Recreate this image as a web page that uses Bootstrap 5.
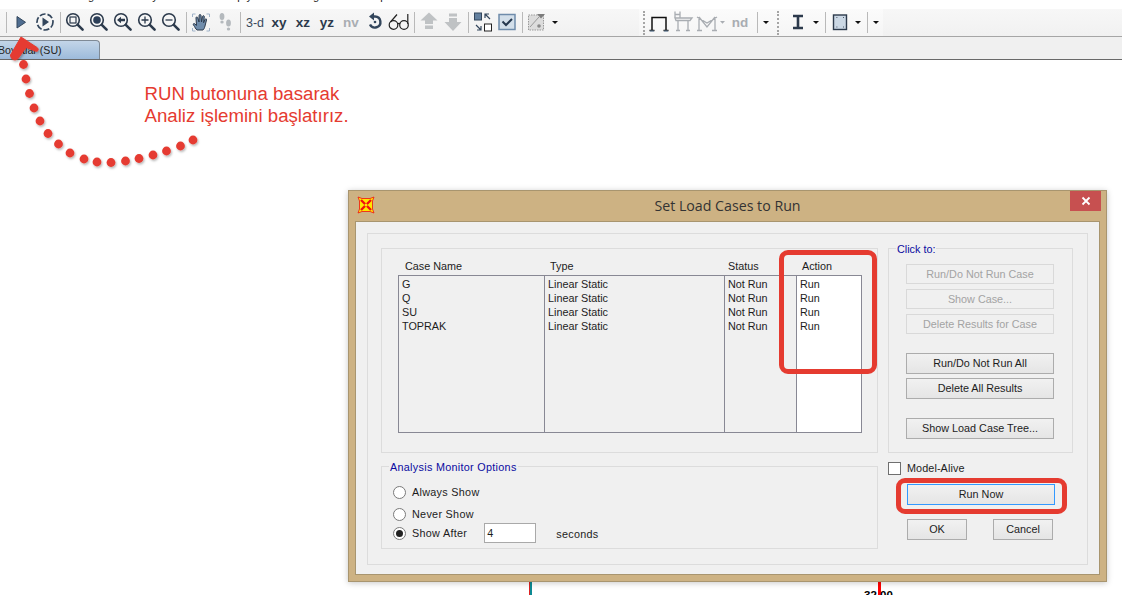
<!DOCTYPE html>
<html lang="tr">
<head>
<meta charset="utf-8">
<title>Set Load Cases to Run</title>
<link href="https://cdn.jsdelivr.net/npm/bootstrap@5.3.0/dist/css/bootstrap.min.css" rel="stylesheet">
<style>
html,body{height:595px;overflow:hidden;background:#fff;}
body{font-family:"Liberation Sans",Arial,sans-serif;font-size:10.8px;color:#1c1c1c;line-height:14px;}
.app{width:1122px;height:595px;overflow:hidden;position:relative;}
.menu-strip{height:9px;overflow:hidden;background:#fff;}
.menu-line{margin-top:-10px;line-height:13px;font-size:11px;padding-left:82px;color:#222;white-space:pre;}
.tool-row{height:28px;background:linear-gradient(#f7f7f7,#f1f1f1);border-bottom:1px solid #a6a6a6;}
.tool-left{flex:0 0 639px;padding-left:6px;}
.tool-right{width:244px;background:linear-gradient(#fbfbfb,#f5f5f5);}
.tslot{width:24px;height:27px;flex:none;display:flex;align-items:center;justify-content:center;}
.tslot svg{display:block;}
.tsep{width:1px;height:21px;background:#b9b9b9;flex:none;margin:0 2px 0 3px;}
.tcaret{width:12px;height:27px;flex:none;display:flex;align-items:center;justify-content:center;}
.tcaret::after{content:"";border-left:3px solid transparent;border-right:3px solid transparent;border-top:3px solid #111;}
.tgrip{width:3px;height:24px;flex:none;border-left:2px dotted #a5a5a5;}
.ttxt{font-size:13.5px;font-weight:700;color:#2c3a4c;}
.ttxt-off{color:#a9adb2;}
.ttxt-thin{font-size:12.5px;font-weight:400;color:#3a4a5c;}
.gap-left-b{margin-left:9px;margin-right:2px;}
.gap-left-c{margin-left:5px;}
.gap-left-e{margin-left:6px;}
.gap-left-d{margin-left:1px;}
.tab-row{height:23px;background:#f0f0f0;border-bottom:1px solid #696969;padding-top:3px;}
.doc-tab{width:103px;height:19px;margin-left:-3px;background:linear-gradient(#c3d5e8,#9dbbdb);border:1px solid #7f8a96;border-bottom:0;border-top-right-radius:4px;padding-left:0;font-size:10.6px;line-height:18px;color:#222;white-space:nowrap;overflow:hidden;}
.note-text{position:absolute;left:144.500px;top:83px;font-size:18.65px;line-height:22px;color:#e53b30;white-space:nowrap;}
.arrow-art{position:absolute;left:0;top:0;}
.win{position:absolute;left:348px;top:190px;width:759px;height:392px;background:#cdb283;border:1px solid #a8956f;box-shadow:0 1px 6px rgba(0,0,0,.22);padding:0 6px 6px;}
.win-title{height:30px;position:relative;font-family:"Open Sans","Noto Sans",sans-serif;font-size:14.2px;color:#333;}
.win-icon{position:absolute;left:2px;top:5px;}
.win-close{position:absolute;right:-1px;top:0;width:31px;height:20px;background:#c75050;display:flex;align-items:center;justify-content:center;}
.win-client{height:354px;background:#f0f0f0;border:1px solid #a8956f;padding:11px;}
.frame-box{height:332px;border:1px solid #dcdcdc;padding:14px 14px 14px 13px;display:grid;grid-template-columns:497px 185px;grid-template-rows:205px 83px;column-gap:10px;row-gap:13px;}
.grp{border:1px solid #dcdcdc;position:relative;}
.grp-legend{position:absolute;left:7px;top:-6px;background:#f0f0f0;padding:0 1px;line-height:13px;color:#0a0aa0;white-space:nowrap;}
.grp-cases{padding:10px 15px 0 16px;}
.cols-head,.cols-body{display:grid;grid-template-columns:146px 180px 72px 66px;}
.cols-head{height:16px;line-height:15px;}
.cols-head>div:nth-child(1){padding-left:7px;}
.cols-head>div:nth-child(2){padding-left:6px;}
.cols-head>div:nth-child(3){padding-left:4px;}
.cols-head>div:nth-child(4){padding-left:6px;}
.cols-body{height:158px;border:1px solid #888894;grid-template-columns:146px 180px 72px 64px;}
.cols-body>div{padding-top:1px;padding-left:3px;border-right:1px solid #888894;}
.cols-body>div:last-child{background:#fff;border-right:0;}
.grp-click{padding:15px 0 0 17px;}
.wbtn{display:block;width:148px;height:21px;padding:0 0 2px;border:1px solid #acacac;border-radius:0;background:linear-gradient(#f1f1f1,#e5e5e5);font:inherit;line-height:16px;color:#1c1c1c;text-align:center;}
.wbtn[disabled]{height:20px;padding:0;background:#f0f0f0;border-color:#d9d9d9;color:#a3a3a3;}
.step-a{margin-top:5px;}
.step-b{margin-top:19px;}
.step-c{margin-top:4px;}
.grp-mon{padding:18px 0 0 11px;letter-spacing:.3px;}
.radio-line{display:flex;align-items:center;height:14px;}
.radio-dot{width:13px;height:13px;border:1px solid #7a7a7a;border-radius:50%;background:#fff;flex:none;margin-right:6px;display:flex;align-items:center;justify-content:center;}
.radio-dot.on::after{content:"";width:7px;height:7px;border-radius:50%;background:#222;}
.line-2{margin-top:8px;}
.line-3{margin-top:5px;}
.num-box{width:52px;height:20px;border:1px solid #a9a9a9;background:#fff;margin-left:17px;padding-left:2px;line-height:19px;flex:none;}
.unit-txt{margin-left:20px;margin-top:2px;}
.alive{display:flex;align-items:center;height:13px;margin-top:-4px;letter-spacing:.1px;}
.alive-box{width:13px;height:13px;border:1px solid #6f6f6f;background:#fff;margin-right:6px;flex:none;}
.alive-name{margin-top:-2px;}
.run-btn{width:148px;margin:9px 0 0 19px;border-color:#3399ff;}
.pair{width:146px;margin:14px 0 0 19px;}
.pair .wbtn{width:60px;}
.red-ring{position:absolute;border:5px solid #e53b30;border-radius:9px;}
.ring-action{left:430px;top:59px;width:98px;height:124px;}
.ring-run{left:547px;top:287px;width:171px;height:36px;}
.hline{position:absolute;top:582px;height:13px;}
.hline-a{left:529px;width:3px;background:linear-gradient(90deg,#d22 0 1px,#0d8a93 1px);}
.hline-b{left:878px;width:3px;background:#f00;}
.dim-text{position:absolute;left:864px;top:589px;font-weight:700;font-size:11.5px;line-height:13px;color:#000;}
</style>
</head>
<body>
<div class="app">
  <svg width="0" height="0" class="position-absolute">
    <symbol id="mag" viewBox="0 0 24 27">
      <circle cx="10" cy="11" r="6.3" fill="#f6f6f6" stroke="#2c3a4c" stroke-width="1.6"/>
      <line x1="14.8" y1="15.8" x2="19.6" y2="20.6" stroke="#2c3a4c" stroke-width="2.6" stroke-linecap="round"/>
    </symbol>
  </svg>

  <div class="menu-strip"><div class="menu-line">ag                   y                          p y                    g                    p</div></div>

  <div class="tool-row d-flex">
    <div class="tool-left d-flex align-items-center">
      <span class="tsep ms-0"></span>
      <span class="tslot"><svg width="24" height="27" viewBox="0 0 24 27"><path d="M8 7.500V19l8.500-5.700z" fill="#4f6d90" stroke="#33465c"/></svg></span>
      <span class="tslot"><svg width="24" height="27" viewBox="0 0 24 27"><circle cx="12" cy="13" r="8" fill="none" stroke="#33465c" stroke-width="1.700" stroke-dasharray="6 2"/><path d="M9.500 8.500v9l6.500-4.500z" fill="#33465c"/></svg></span>
      <span class="tsep"></span>
      <span class="tslot"><svg width="24" height="27" viewBox="0 0 24 27"><use href="#mag"/><rect x="7" y="8" width="6" height="6" fill="none" stroke="#2c3a4c" stroke-width="1.200"/></svg></span>
      <span class="tslot"><svg width="24" height="27" viewBox="0 0 24 27"><use href="#mag"/><circle cx="10" cy="11" r="3.800" fill="#2c3f58"/></svg></span>
      <span class="tslot"><svg width="24" height="27" viewBox="0 0 24 27"><use href="#mag"/><path d="M6 11l4-3.200v2h4v2.400h-4v2z" fill="#2c3a4c"/></svg></span>
      <span class="tslot"><svg width="24" height="27" viewBox="0 0 24 27"><use href="#mag"/><path d="M10 7.500v7M6.500 11h7" stroke="#2c3a4c" stroke-width="1.300"/></svg></span>
      <span class="tslot"><svg width="24" height="27" viewBox="0 0 24 27"><use href="#mag"/><path d="M6.500 11h7" stroke="#2c3a4c" stroke-width="1.300"/></svg></span>
      <span class="tsep"></span>
      <span class="tslot"><svg width="24" height="27" viewBox="0 0 24 27"><path d="M3.500 8V5h3M17.500 5h3v3M20.500 19v3h-3M6.500 22h-3v-3" fill="none" stroke="#9fb2c8"/><path d="M8 21c-1.500-1-2-3-3.500-5-.8-1.200.5-2 1.500-1l1.500 1.500L7 9c-.2-1.200 1.500-1.400 1.800-.2L10 13l.1-6.500c0-1.300 1.800-1.300 1.900 0l.5 6.500 1-5.500c.3-1.200 1.900-1 1.800.2l-.7 6 1.400-3.300c.5-1 1.900-.6 1.500.6L16 17c-.5 2-1 3-2 4z" fill="#6f8cab" stroke="#2c3a4c"/></svg></span>
      <span class="tslot"><svg width="24" height="27" viewBox="0 0 24 27" fill="#b4b9bd"><ellipse cx="9" cy="7.500" rx="2.400" ry="3.500"/><ellipse cx="9" cy="13" rx="1.700" ry="1.500"/><ellipse cx="15.500" cy="14" rx="2.400" ry="3.500"/><ellipse cx="15.500" cy="20" rx="1.700" ry="1.500"/></svg></span>
      <span class="tsep"></span>
      <span class="tslot ttxt ttxt-thin">3-d</span>
      <span class="tslot ttxt">xy</span>
      <span class="tslot ttxt">xz</span>
      <span class="tslot ttxt">yz</span>
      <span class="tslot ttxt ttxt-off">nv</span>
      <span class="tslot"><svg width="24" height="27" viewBox="0 0 24 27"><path d="M8 7.500h4a5.500 5.500 0 1 1-5 8" fill="none" stroke="#33465c" stroke-width="2.400"/><path d="M11 3.500v8L6 7.500z" fill="#33465c"/><circle cx="12" cy="13" r="1.300" fill="#33465c"/></svg></span>
      <span class="tslot"><svg width="24" height="27" viewBox="0 0 24 27" fill="none" stroke="#222" stroke-width="1.200"><circle cx="6.500" cy="16" r="4.300"/><circle cx="17" cy="16" r="4.300"/><path d="M10.500 15c1-.8 2-.8 2.700 0M3.500 13L10 5.500M20.800 15V5"/></svg></span>
      <span class="tsep"></span>
      <span class="tslot"><svg width="24" height="27" viewBox="0 0 24 27" fill="#bfc2c4"><path d="M12 3.500l8.500 8h-4.500v3.500H8v-3.500H3.500z"/><rect x="8" y="16.500" width="8" height="3.500"/></svg></span>
      <span class="tslot"><svg width="24" height="27" viewBox="0 0 24 27" fill="#bfc2c4"><rect x="8" y="4.500" width="8" height="3"/><path d="M8 9h8v4h4.500L12 22 3.500 13H8z"/></svg></span>
      <span class="tsep"></span>
      <span class="tslot"><svg width="24" height="27" viewBox="0 0 24 27"><rect x="3.500" y="4" width="7" height="7" fill="#63809f" stroke="#33465c"/><rect x="13.500" y="15" width="7" height="7" fill="#fff" stroke="#222"/><path d="M19 10l-4.500-4.500M14 9V5h4M5 16l4.500 4.500M10 17v4H6" fill="none" stroke="#33465c" stroke-width="1.200"/></svg></span>
      <span class="tslot"><svg width="24" height="27" viewBox="0 0 24 27"><rect x="4" y="5.500" width="16" height="15" fill="#d3dfea" stroke="#6f8cab" stroke-width="1.500"/><path d="M7.500 12.500l3.500 3.500 6-6" fill="none" stroke="#26384e" stroke-width="2"/></svg></span>
      <span class="tsep"></span>
      <span class="tslot"><svg width="24" height="27" viewBox="0 0 24 27"><rect x="3.500" y="6" width="15" height="15" fill="#dcdcdc" stroke="#999" stroke-dasharray="1.500 1"/><path d="M5 18l9-10" stroke="#999"/><circle cx="14" cy="17" r="1.800" fill="#888"/><path d="M12 5h8l-4 4.500z" fill="#7c7c7c"/></svg></span>
      <span class="tcaret"></span>
    </div>
    <div class="tool-right d-flex align-items-center">
      <span class="tgrip ms-1"></span>
      <span class="tslot gap-left-d"><svg width="24" height="27" viewBox="0 0 24 27"><path d="M5 21V8.500h14V21M2.500 21.500h5M16.500 21.500h5" fill="none" stroke="#111" stroke-width="1.500"/><path d="M3 22h4M17 22h4" stroke="#6f8cab"/></svg></span>
      <span class="tslot"><svg width="24" height="27" viewBox="0 0 24 27" fill="none" stroke="#a9adb2" stroke-width="1.300"><path d="M4 9h17l-2 2.500h-14zM7 11.500V21M17 11.500V21M5 21.500h4M15 21.500h4M4 2.500v6M9 2.500v6M4 5.500h5"/></svg></span>
      <span class="tslot"><svg width="24" height="27" viewBox="0 0 24 27" overflow="visible" fill="none" stroke="#a9adb2" stroke-width="1.300"><path d="M2 8l10 6 10-6M4 8v13M20 8v13M2 21.500h5M17 21.500h5M4 8l8 10 8-10"/><path d="M25 12h5l-2.500 2.800z" fill="#a9adb2" stroke="none"/></svg></span>
      <span class="tslot ttxt ttxt-off gap-left-b">nd</span>
      <span class="tsep"></span>
      <span class="tcaret"></span>
      <span class="tgrip gap-left-c"></span>
      <span class="tslot gap-left-e"><svg width="24" height="27" viewBox="0 0 24 27"><path d="M7 7h10M7 19h10M12 7v12" stroke="#2c3a4c" stroke-width="2.600" fill="none"/></svg></span>
      <span class="tcaret"></span>
      <span class="tsep"></span>
      <span class="tslot"><svg width="24" height="27" viewBox="0 0 24 27"><rect x="5.500" y="6" width="13" height="14.500" fill="#cbd8e5" stroke="#2c3a4c" stroke-width="1.400"/><path d="M8.500 8.500h.8M15 8.500h.8M8.500 18h.8M15 18h.8" stroke="#2c3a4c"/></svg></span>
      <span class="tcaret"></span>
      <span class="tsep"></span>
      <span class="tcaret"></span>
    </div>
  </div>

  <div class="tab-row"><div class="doc-tab">Boyutlar (SU)</div></div>

  <svg class="arrow-art" width="230" height="180" viewBox="0 0 230 180">
    <defs><filter id="soft" x="-20%" y="-20%" width="140%" height="140%"><feDropShadow dx="1" dy="1.500" stdDeviation="1" flood-color="#000" flood-opacity=".3"/></filter></defs>
    <g fill="#e53b30" filter="url(#soft)">
      <path d="M21 37l16 10.500c2 1.500 1.500 4-1 3.800L26 47.500 18.500 58c-2.500 3.500-8 2-8-3z" stroke="#e53b30" stroke-linejoin="round"/>
      <circle cx="23.500" cy="64.500" r="4.400"/><circle cx="26" cy="79" r="4.400"/><circle cx="29.500" cy="93.500" r="4.400"/><circle cx="34" cy="108" r="4.400"/><circle cx="40" cy="121" r="4.400"/><circle cx="48" cy="133.500" r="4.400"/><circle cx="58.500" cy="144" r="4.400"/><circle cx="70" cy="153" r="4.400"/><circle cx="84" cy="159" r="4.400"/><circle cx="97" cy="162" r="4.400"/><circle cx="111" cy="162.500" r="4.400"/><circle cx="125.500" cy="161" r="4.400"/><circle cx="139" cy="158.500" r="4.400"/><circle cx="153" cy="155" r="4.400"/><circle cx="166.500" cy="151" r="4.400"/><circle cx="180.500" cy="146" r="4.400"/><circle cx="193" cy="140" r="4.400"/>
    </g>
  </svg>
  <div class="note-text">RUN butonuna basarak<br>Analiz işlemini başlatırız.</div>

  <div class="hline hline-a"></div>
  <div class="hline hline-b"></div>
  <div class="dim-text">32.00</div>

  <div class="win">
    <div class="win-title d-flex align-items-center justify-content-center">
      <svg class="win-icon" width="18" height="18" viewBox="0 0 18 18"><path d="M1 1l4 1.500h8L17 1l-1.500 4v8L17 17l-4-1.500H5L1 17l1.500-4V5z" fill="#ffe600" stroke="#f01010" stroke-width=".8"/><path d="M4 4l10 10M14 4L4 14" stroke="#f01010" stroke-width="2.400"/><circle cx="9" cy="9" r="1.500" fill="#ffe600"/></svg>
      <span>Set Load Cases to Run</span>
      <span class="win-close"><svg width="10" height="10" viewBox="0 0 10 10"><path d="M1.500 1.500l7 7M8.500 1.500l-7 7" stroke="#fff" stroke-width="1.800"/></svg></span>
    </div>
    <div class="win-client">
      <div class="frame-box">
        <div class="grp grp-cases">
          <div class="cols-head"><div>Case Name</div><div>Type</div><div>Status</div><div>Action</div></div>
          <div class="cols-body">
            <div>G<br>Q<br>SU<br>TOPRAK</div>
            <div>Linear Static<br>Linear Static<br>Linear Static<br>Linear Static</div>
            <div>Not Run<br>Not Run<br>Not Run<br>Not Run</div>
            <div>Run<br>Run<br>Run<br>Run</div>
          </div>
        </div>
        <div class="grp grp-click">
          <span class="grp-legend">Click to:</span>
          <button class="wbtn" disabled>Run/Do Not Run Case</button>
          <button class="wbtn step-a" disabled>Show Case...</button>
          <button class="wbtn step-a" disabled>Delete Results for Case</button>
          <button class="wbtn step-b">Run/Do Not Run All</button>
          <button class="wbtn step-c">Delete All Results</button>
          <button class="wbtn step-b">Show Load Case Tree...</button>
        </div>
        <div class="grp grp-mon">
          <span class="grp-legend">Analysis Monitor Options</span>
          <div class="radio-line"><span class="radio-dot"></span>Always Show</div>
          <div class="radio-line line-2"><span class="radio-dot"></span>Never Show</div>
          <div class="radio-line line-3"><span class="radio-dot on"></span>Show After<span class="num-box">4</span><span class="unit-txt">seconds</span></div>
        </div>
        <div>
          <div class="alive"><span class="alive-box"></span><span class="alive-name">Model-Alive</span></div>
          <button class="wbtn run-btn">Run Now</button>
          <div class="pair d-flex justify-content-between"><button class="wbtn">OK</button><button class="wbtn">Cancel</button></div>
        </div>
      </div>
    </div>
    <div class="red-ring ring-action"></div>
    <div class="red-ring ring-run"></div>
  </div>
</div>
<script src="https://cdn.jsdelivr.net/npm/bootstrap@5.3.0/dist/js/bootstrap.bundle.min.js"></script>
</body>
</html>
